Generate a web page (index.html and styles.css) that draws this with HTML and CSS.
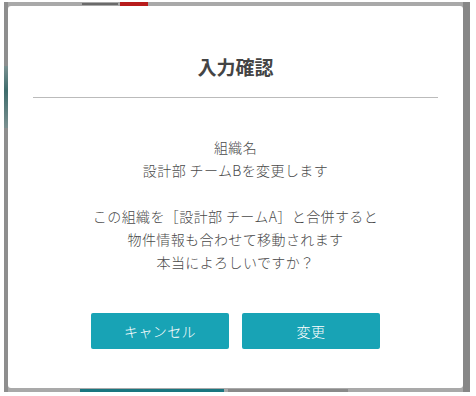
FILE: index.html
```html
<!DOCTYPE html>
<html lang="ja">
<head>
<meta charset="utf-8">
<link rel="stylesheet" href="styles.css">
</head>
<body>
<div class="frame">
  <span class="bg-text-top"></span>
  <span class="bg-red-top"></span>
  <span class="bg-teal-left"></span>
  <span class="bg-teal-bottom"></span>
  <span class="bg-text-bottom"></span>
  <div class="modal">
    <h1 class="title">入力確認</h1>
    <hr class="divider">
    <div class="message">
      <p>組織名<br>設計部 チームBを変更します</p>
      <p>この組織を［設計部 チームA］と合併すると<br>物件情報も合わせて移動されます<br>本当によろしいですか？</p>
    </div>
    <div class="actions">
      <button class="btn">キャンセル</button>
      <button class="btn">変更</button>
    </div>
  </div>
</div>
</body>
</html>
```
FILE: styles.css
```css
html, body {
  margin: 0;
  padding: 0;
  background: #ffffff;
}
body {
  font-family: "Noto Sans CJK JP", "Noto Sans", sans-serif;
}
.frame {
  position: relative;
  margin: 2px 6px 0 4px;
  padding: 4px 7px 4px 4px;
  background: #a9a9a9;
  box-shadow: inset 4px 0 0 #8e8e8e, inset -7px 0 0 #878787;
}
.bg-text-top {
  position: absolute;
  left: 78px;
  top: 1px;
  width: 36px;
  height: 2px;
  background: #6a6a6a;
}
.bg-red-top {
  position: absolute;
  left: 116px;
  top: 0;
  width: 28px;
  height: 4px;
  background: #b81c1c;
}
.bg-teal-left {
  position: absolute;
  left: 0;
  top: 64px;
  width: 4px;
  height: 62px;
  background: linear-gradient(#7a9090, #3e6c6c 40%, #7b9090);
}
.bg-teal-bottom {
  position: absolute;
  left: 76px;
  bottom: 0;
  width: 144px;
  height: 3px;
  background: #1a7680;
}
.bg-text-bottom {
  position: absolute;
  left: 224px;
  bottom: 0;
  width: 120px;
  height: 3px;
  background: #8a8a8a;
}
.modal {
  position: relative;
  height: 382px;
  box-sizing: border-box;
  background: #ffffff;
  border-radius: 3px;
  padding: 47px 25px 0;
  text-align: center;
  color: #555555;
}
.title {
  margin: 0;
  font-size: 19px;
  line-height: 28px;
  font-weight: 700;
  color: #444444;
}
.divider {
  margin: 16px 0 0;
  border: 0;
  height: 1px;
  background: #bbbbbb;
}
.message {
  margin-top: 38px;
  font-size: 14px;
  line-height: 23px;
  letter-spacing: 0.4px;
  font-weight: 300;
  color: #4a4a4a;
}
.message p {
  margin: 0 0 23px;
}
.message p:last-child {
  margin-bottom: 0;
}
.actions {
  margin-top: 39px;
  display: flex;
  justify-content: center;
  gap: 13px;
}
.btn {
  width: 138px;
  height: 36px;
  border: 0;
  border-radius: 2px;
  background: #18a3b5;
  color: #ffffff;
  font-family: "Noto Sans CJK JP", "Noto Sans", sans-serif;
  font-size: 14px;
  font-weight: 300;
  letter-spacing: 0.4px;
  padding: 0;
}
```
